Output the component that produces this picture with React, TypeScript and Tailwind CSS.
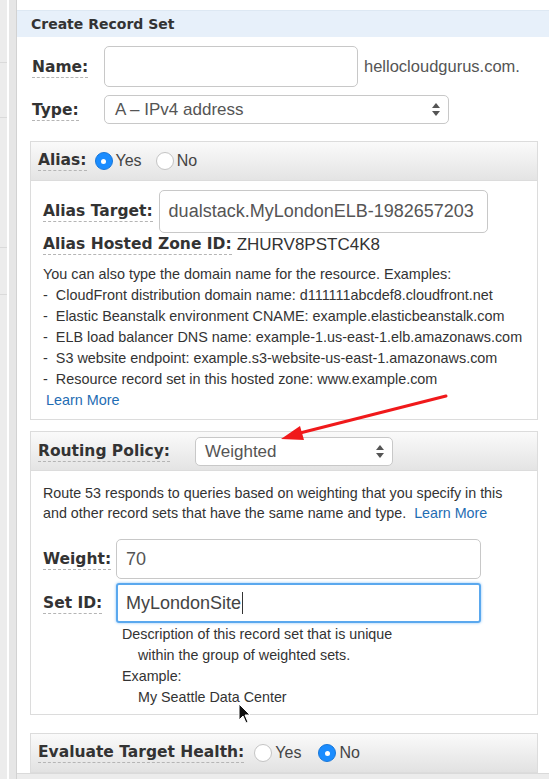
import React from "react";

const LBL = "font-['DejaVu_Sans',sans-serif] font-bold text-[#333] text-[15.5px] leading-[18px] border-b border-dashed border-[#b5b5b5] pb-[1px]";
const BODY = "font-['Liberation_Sans',Arial,sans-serif]";

function Radio({ on }: { on: boolean }) {
  return on ? (
    <span className="inline-flex items-center justify-center w-[18px] h-[18px] rounded-full bg-[#1a8cff] border border-[#1877d9]">
      <span className="w-[5px] h-[5px] rounded-full bg-white" />
    </span>
  ) : (
    <span className="inline-block w-[18px] h-[18px] rounded-full bg-white border border-[#c4c4c4]" />
  );
}

function Arrows() {
  return (
    <svg width="8" height="13" viewBox="0 0 8 13">
      <path d="M4 0 L8 5 L0 5 Z" fill="#555" />
      <path d="M4 13 L8 8 L0 8 Z" fill="#555" />
    </svg>
  );
}

export default function App() {
  return (
    <div className={`relative w-[549px] h-[779px] overflow-hidden bg-white flex ${BODY}`}>
      {/* left side strips */}
      <div className="w-[7px] bg-[#ececec] flex flex-col">
        <div className="h-[63px] border-b border-[#dadada]" />
        <div className="h-[55px] border-b border-[#dadada]" />
        <div className="h-[130px] border-b border-[#dadada]" />
        <div className="h-[47px] border-b border-[#dadada]" />
      </div>
      <div className="w-[2px] bg-white" />
      <div className="w-[8px] bg-[#e6e6e6] border-r border-[#d2d2d2]" />

      <div className="flex-1 flex flex-col pt-[10px]">
        <div className="h-[29px] bg-[#e7f0fa] border-t border-[#dde8f3] flex items-center pl-[14px]">
          <span className="font-['DejaVu_Sans',sans-serif] font-bold text-[14px] text-[#333]">Create Record Set</span>
        </div>

        <div className="flex-1 flex flex-col pl-[13px] pr-[11px] pt-[9px]">
          {/* Name */}
          <div className="flex items-center h-[41px] pl-[2px]">
            <div className="w-[72px]"><span className={LBL}>Name:</span></div>
            <div className="w-[254px] h-[41px] border border-[#c8c8c8] rounded-[5px] bg-white" />
            <span className="ml-[6px] text-[16.5px] text-[#555]">hellocloudgurus.com.</span>
          </div>
          {/* Type */}
          <div className="flex items-center h-[29px] mt-[8px] pl-[2px]">
            <div className="w-[72px]"><span className={LBL}>Type:</span></div>
            <div className="w-[345px] h-[29px] border border-[#c8c8c8] rounded-[5px] bg-white flex items-center pl-[10px] pr-[8px]">
              <span className="flex-1 text-[17px] text-[#555]">A – IPv4 address</span>
              <Arrows />
            </div>
          </div>

          {/* Alias box */}
          <div className="mt-[17px] border border-[#dcdcdc] flex flex-col">
            <div className="h-[39px] bg-gradient-to-b from-[#fafafa] to-[#e4e4e4] border-b border-[#dcdcdc] flex items-center pl-[7px]">
              <span className={LBL}>Alias:</span>
              <span className="ml-[8px] flex items-center"><Radio on /></span>
              <span className="ml-[3px] text-[16px] text-[#444]">Yes</span>
              <span className="ml-[14px] flex items-center"><Radio on={false} /></span>
              <span className="ml-[3px] text-[16px] text-[#444]">No</span>
            </div>
            <div className="flex flex-col pl-[12px] pt-[9px] pb-[8px]">
              <div className="flex items-center h-[43px]">
                <span className={LBL}>Alias Target:</span>
                <div className="ml-[6px] w-[329px] h-[43px] border border-[#c8c8c8] rounded-[5px] flex items-center pl-[9px] overflow-hidden">
                  <span className="text-[18px] text-[#555] whitespace-nowrap">dualstack.MyLondonELB-1982657203</span>
                </div>
              </div>
              <div className="flex items-center h-[19px] mt-[2px]">
                <span className={LBL}>Alias Hosted Zone ID:</span>
                <span className="ml-[5px] text-[17px] text-[#333]">ZHURV8PSTC4K8</span>
              </div>
              <div className="mt-[10px] text-[14.4px] leading-[21px] text-[#333]">
                <div>You can also type the domain name for the resource. Examples:</div>
                <div>-&nbsp; CloudFront distribution domain name: d111111abcdef8.cloudfront.net</div>
                <div>-&nbsp; Elastic Beanstalk environment CNAME: example.elasticbeanstalk.com</div>
                <div>-&nbsp; ELB load balancer DNS name: example-1.us-east-1.elb.amazonaws.com</div>
                <div>-&nbsp; S3 website endpoint: example.s3-website-us-east-1.amazonaws.com</div>
                <div>-&nbsp; Resource record set in this hosted zone: www.example.com</div>
                <div className="pl-[3px] text-[#1f6db3]">Learn More</div>
              </div>
            </div>
          </div>

          {/* Routing policy box */}
          <div className="mt-[11px] border border-[#dcdcdc] flex flex-col">
            <div className="h-[39px] bg-gradient-to-b from-[#fafafa] to-[#e4e4e4] border-b border-[#dcdcdc] flex items-center pl-[7px]">
              <div className="w-[157px]"><span className={LBL}>Routing Policy:</span></div>
              <div className="w-[198px] h-[29px] border border-[#c8c8c8] rounded-[5px] bg-white flex items-center pl-[9px] pr-[8px]">
                <span className="flex-1 text-[17px] text-[#555]">Weighted</span>
                <Arrows />
              </div>
            </div>
            <div className="flex flex-col pl-[12px] pt-[12px] pb-[6px]">
              <div className="text-[14.3px] leading-[20px] text-[#333]">
                <div>Route 53 responds to queries based on weighting that you specify in this</div>
                <div>and other record sets that have the same name and type.&nbsp; <span className="text-[#1f6db3]">Learn More</span></div>
              </div>
              <div className="flex items-center h-[40px] mt-[16px]">
                <div className="w-[73px]"><span className={LBL}>Weight:</span></div>
                <div className="w-[365px] h-[40px] border border-[#c8c8c8] rounded-[5px] flex items-center pl-[9px]">
                  <span className="text-[18px] text-[#555]">70</span>
                </div>
              </div>
              <div className="flex items-center h-[40px] mt-[4px]">
                <div className="w-[73px]"><span className={LBL}>Set ID:</span></div>
                <div className="w-[365px] h-[40px] border-2 border-[#5aa8ee] rounded-[3px] shadow-[0_0_3px_#8cc4f5] flex items-center pl-[8px]">
                  <span className="text-[18px] text-[#444]">MyLondonSite</span>
                  <span className="w-[1px] h-[22px] bg-[#333] ml-[1px]" />
                </div>
              </div>
              <div className="pl-[79px] mt-[1px] text-[14.3px] leading-[21px] text-[#333]">
                <div>Description of this record set that is unique</div>
                <div className="pl-[16px]">within the group of weighted sets.</div>
                <div>Example:</div>
                <div className="pl-[16px]">My Seattle Data Center</div>
              </div>
            </div>
          </div>

          {/* Evaluate Target Health */}
          <div className="mt-[18px] h-[40px] border border-[#dcdcdc] bg-gradient-to-b from-[#fafafa] to-[#e2e2e2] flex items-center pl-[7px]">
            <span className={LBL}>Evaluate Target Health:</span>
            <span className="ml-[10px] flex items-center"><Radio on={false} /></span>
            <span className="ml-[3px] text-[16px] text-[#444]">Yes</span>
            <span className="ml-[17px] flex items-center"><Radio on /></span>
            <span className="ml-[3px] text-[16px] text-[#444]">No</span>
          </div>
        </div>
        <div className="h-[6px] bg-[#ececec] border-t border-[#dadada]" />
      </div>

      {/* red arrow annotation */}
      <svg className="absolute left-0 top-0 pointer-events-none" width="549" height="779">
        <line x1="446" y1="396" x2="296" y2="434" stroke="#f0191b" strokeWidth="3" strokeLinecap="round" />
        <path d="M281 439 L300 426 L304 440 Z" fill="#f0191b" />
        {/* mouse cursor */}
        <path d="M239 704 L239 720 L243 716 L246 723 L248 722 L245 715 L250 715 Z" fill="#111" stroke="#fff" strokeWidth="1" />
      </svg>
    </div>
  );
}
